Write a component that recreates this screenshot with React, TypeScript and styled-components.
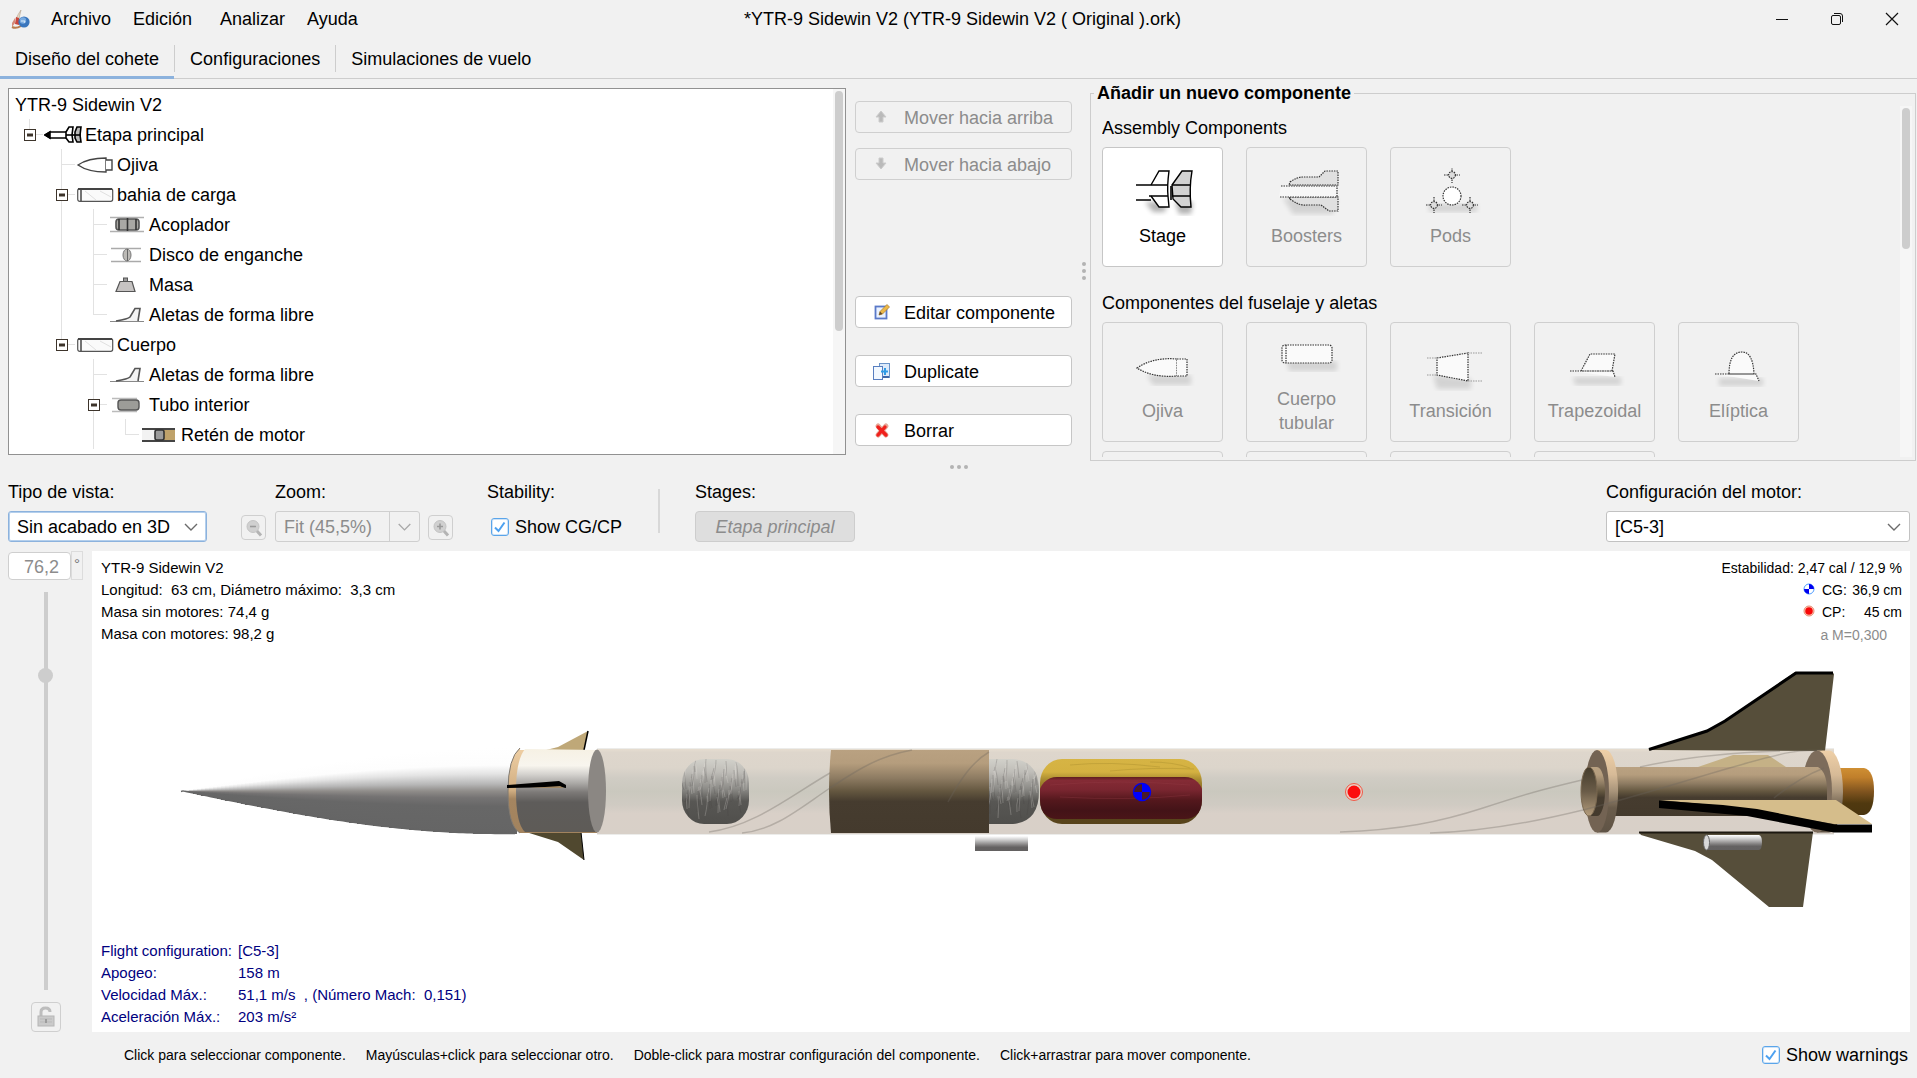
import React from 'react';
import styled, { createGlobalStyle, css } from 'styled-components';

const GlobalStyle = createGlobalStyle`
  *, *::before, *::after { box-sizing: border-box; }
  body { margin: 0; background: #f1f1f1; }
  body, button, input, select {
    font-family: "Liberation Sans", Arial, sans-serif;
    font-size: 18px;
    line-height: 20px;
    color: #000;
  }
`;

/* ---------- window frame ---------- */

const Window = styled.div`
  display: flex;
  flex-direction: column;
  height: 100vh;
  min-height: 820px;
  background: #f1f1f1;
  overflow: hidden;
`;

const TitleBar = styled.header`
  display: grid;
  grid-template-columns: 1fr auto 1fr;
  align-items: center;
  height: 38px;
  padding: 0 2px 0 10px;
`;

const MenuBar = styled.nav`
  display: flex;
  align-items: center;
  gap: 20px;
`;

const MenuButton = styled.button<{ $wide?: boolean }>`
  border: 0;
  padding: 0;
  background: none;
  margin-right: ${(p) => (p.$wide ? 8 : 2)}px;
`;

const WindowTitle = styled.h1`
  margin: 0;
  font-size: 18px;
  font-weight: 400;
  line-height: 20px;
`;

const WindowControls = styled.div`
  display: flex;
  justify-content: flex-end;
`;

const WindowButton = styled.button`
  display: grid;
  place-items: center;
  width: 55px;
  height: 36px;
  padding: 0 0 0 8px;
  border: 0;
  background: none;
`;

const Tabs = styled.div`
  display: flex;
  align-items: stretch;
  height: 41px;
  border-bottom: 1px solid #cdcdcd;
  flex: none;
`;

const Tab = styled.button<{ $active?: boolean }>`
  display: flex;
  align-items: center;
  padding: 4px 15px 0;
  margin-bottom: -1px;
  border: 0;
  border-bottom: 3px solid ${(p) => (p.$active ? '#8cb2dd' : 'transparent')};
  background: none;
`;

const TabDivider = styled.span`
  width: 1px;
  height: 27px;
  margin-top: 7px;
  background: #cdcdcd;
`;

/* ---------- upper split pane ---------- */

const DesignPane = styled.section`
  display: grid;
  grid-template-columns: minmax(0, 838fr) 226px 18px minmax(0, 826fr);
  padding: 4px 1px 0 8px;
  height: 382px;
  flex: none;
`;

const TreeBox = styled.div`
  display: flex;
  height: 367px;
  margin: 5px 0 0;
  border: 1px solid #919191;
  background: #fff;
  overflow: hidden;
`;

const TreeList = styled.ul`
  flex: 1;
  margin: 0;
  padding: 0;
  list-style: none;
`;

const TreeRow = styled.li`
  display: flex;
  align-items: center;
  height: 30px;
`;

const GuideCell = styled.span`
  display: block;
  width: 32px;
  height: 30px;
  flex: none;
`;

const TreeIcon = styled.svg`
  width: 38px;
  height: 20px;
  margin: 2px 3px 0 -4px;
  flex: none;
`;

const TreeLabel = styled.span`
  padding-top: 2px;
  white-space: nowrap;
`;

const TreeStart = styled.span<{ $root?: boolean }>`
  width: ${(p) => (p.$root ? 6 : 7)}px;
  flex: none;
`;

const ScrollTrack = styled.div<{ $thumb: number }>`
  width: 12px;
  padding: 2px;
  background: #f6f6f6;
  flex: none;
  &::before {
    content: '';
    display: block;
    height: ${(p) => p.$thumb}px;
    border-radius: 4px;
    background: #cdcdcd;
  }
`;

const ActionColumn = styled.div`
  display: flex;
  flex-direction: column;
  justify-content: space-between;
  height: 345px;
  padding-left: 9px;
  margin-top: 18px;
`;

const ActionGroup = styled.div<{ $gap: number }>`
  display: flex;
  flex-direction: column;
  gap: ${(p) => p.$gap}px;
`;

const buttonFrame = css`
  border: 1px solid #c6c6c6;
  border-radius: 4px;
  background: #fff;
  &:disabled {
    border-color: #cfcfcf;
    background: #f1f1f1;
    color: #8c8c8c;
  }
`;

const ActionButton = styled.button`
  ${buttonFrame}
  display: flex;
  align-items: center;
  gap: 12px;
  width: 100%;
  height: 32px;
  padding: 1px 0 0 16px;
  white-space: nowrap;
`;

const GripColumn = styled.div`
  display: flex;
  flex-direction: column;
  align-items: center;
  justify-content: center;
  gap: 3px;
  padding: 0 0 2px 6px;
`;

const GripRow = styled.div`
  display: flex;
  justify-content: center;
  align-items: center;
  gap: 3px;
  height: 12px;
  flex: none;
`;

const GripDot = styled.i`
  width: 4px;
  height: 4px;
  border-radius: 2px;
  background: #b3b3b3;
`;

const ComponentGroup = styled.fieldset`
  display: flex;
  min-width: 0;
  height: 378px;
  margin: 0;
  padding: 0 3px 3px 11px;
  border: 1px solid #cdcdcd;
  overflow: hidden;
`;

const GroupLegend = styled.legend`
  margin-left: -8px;
  padding: 0 3px;
  height: 20px;
  font-weight: 700;
`;

const GroupBody = styled.div`
  display: flex;
  flex: 1;
  height: 354px;
  padding-top: 3px;
`;

const CardArea = styled.div`
  flex: 1;
  overflow: hidden;
`;

const CardHeading = styled.h2`
  margin: 0;
  padding-top: 12px;
  height: 41px;
  font-size: 18px;
  font-weight: 400;
  line-height: 20px;
`;

const CardGrid = styled.div`
  display: grid;
  grid-template-columns: repeat(5, 121px);
  column-gap: 23px;
  row-gap: 9px;
  & + h2 { margin-top: 14px; }
`;

const ComponentCard = styled.button`
  ${buttonFrame}
  display: flex;
  flex-direction: column;
  align-items: center;
  justify-content: center;
  gap: 8px;
  height: 120px;
  padding: 2px 8px 0;
  line-height: 24px;
`;

const CardIcon = styled.svg`
  width: 68px;
  height: 48px;
`;

/* ---------- view toolbar ---------- */

const ViewBar = styled.section`
  display: flex;
  align-items: flex-start;
  height: 78px;
  padding: 8px 7px 0 8px;
  flex: none;
`;

const Field = styled.div<{ $width: number; $after: number }>`
  width: ${(p) => p.$width}px;
  margin-right: ${(p) => p.$after}px;
`;

const FieldLabel = styled.label`
  display: block;
  height: 30px;
  padding-top: 1px;
  white-space: nowrap;
`;

const SelectBox = styled.span<{ $focus?: boolean; $split?: boolean; $disabled?: boolean }>`
  display: grid;
  grid-template-columns: 1fr 30px;
  align-items: center;
  height: 31px;
  border: 1px solid ${(p) => (p.$focus ? '#8cb2dd' : p.$disabled ? '#cfcfcf' : '#c2c2c2')};
  box-shadow: ${(p) => (p.$focus ? 'inset 0 0 0 1px #b4cfec' : 'none')};
  border-radius: 3px;
  background: ${(p) => (p.$disabled ? '#f1f1f1' : '#fff')};
  select {
    grid-area: 1 / 1 / 2 / 3;
    appearance: none;
    height: 29px;
    padding: 1px 30px 0 8px;
    border: 0;
    outline: 0;
    background: none;
    opacity: 1;
    color: ${(p) => (p.$disabled ? '#8c8c8c' : '#000')};
  }
  svg {
    grid-area: 1 / 2 / 2 / 3;
    width: 30px;
    height: 29px;
    pointer-events: none;
    border-left: ${(p) => (p.$split ? '1px solid #cfcfcf' : '0')};
  }
`;

const ToolButton = styled.button<{ $size: number }>`
  ${buttonFrame}
  display: grid;
  place-items: center;
  width: ${(p) => p.$size}px;
  height: ${(p) => p.$size}px;
  padding: 0;
`;

const ZoomButtonSlot = styled.div<{ $after: number }>`
  margin: 34px ${(p) => p.$after}px 0 0;
`;

const CheckLabel = styled.label<{ $indent?: boolean }>`
  display: flex;
  align-items: center;
  gap: 6px;
  height: 31px;
  padding-left: ${(p) => (p.$indent ? 4 : 0)}px;
  white-space: nowrap;
`;

const CheckBox = styled.span`
  display: grid;
  width: 18px;
  height: 18px;
  input {
    grid-area: 1 / 1;
    appearance: none;
    width: 18px;
    height: 18px;
    margin: 0;
    border: 1px solid #5aa5ea;
    border-radius: 3px;
    background: #fff;
    box-shadow: 0 0 0 1px #cfe3f7 inset;
  }
  svg {
    grid-area: 1 / 1;
    pointer-events: none;
  }
`;

const BarDivider = styled.span`
  width: 2px;
  height: 44px;
  margin: 8px 35px 0 -1px;
  background: #d8d8d8;
`;

const StageToggle = styled.button`
  width: 100%;
  height: 31px;
  border: 1px solid #cdcdcd;
  border-radius: 4px;
  background: #dedede;
  color: #8c8c8c;
  font-style: italic;
`;

const Spacer = styled.span`
  flex: 1;
`;

/* ---------- rocket view ---------- */

const ViewArea = styled.section`
  display: grid;
  grid-template-columns: 84px minmax(0, 1fr);
  flex: 1;
  min-height: 0;
  padding: 0 7px 0 8px;
`;

const RotationColumn = styled.div`
  display: flex;
  flex-direction: column;
  min-height: 0;
`;

const AngleRow = styled.div`
  display: flex;
  align-items: flex-start;
  height: 29px;
`;

const AngleInput = styled.input`
  width: 63px;
  height: 28px;
  margin: 1px 0 0;
  padding: 2px 11px 0 0;
  text-align: right;
  border: 1px solid #cfcfcf;
  border-radius: 4px;
  background: #fff;
  color: #8c8c8c;
`;

const DegreeButton = styled.button`
  width: 12px;
  height: 29px;
  padding: 0 0 4px;
  border: 1px solid #dcdcdc;
  background: #f1f1f1;
  font-size: 15px;
  color: #777;
`;

const RotationSlider = styled.input`
  appearance: none;
  writing-mode: vertical-lr;
  flex: 1;
  width: 15px;
  min-height: 0;
  margin: 12px 0 12px 30px;
  background: linear-gradient(#cdcdcd, #cdcdcd) center / 4px 100% no-repeat;
  opacity: 1;
  &::-webkit-slider-thumb {
    appearance: none;
    width: 15px;
    height: 15px;
    border-radius: 50%;
    background: #cdcdcd;
  }
`;

const LockSlot = styled.div`
  margin-left: 23px;
`;

const RocketCanvas = styled.div`
  display: grid;
  min-height: 0;
  background: #fff;
  overflow: hidden;
  font-size: 15px;
  line-height: 22px;
`;

const RocketDrawing = styled.svg`
  grid-area: 1 / 1;
  width: 100%;
  height: 100%;
`;

const SharedDefs = styled.svg`
  display: block;
  width: 0;
  height: 0;
  flex: none;
`;

const Overlay = styled.div`
  grid-area: 1 / 1;
  display: flex;
  flex-direction: column;
  justify-content: space-between;
  padding: 6px 8px 4px 9px;
`;

const OverlayTop = styled.div`
  display: flex;
  justify-content: space-between;
`;

const InfoLine = styled.p`
  margin: 0;
  height: 22px;
  white-space: pre;
`;

const StabilityLine = styled.p`
  display: flex;
  align-items: center;
  justify-content: flex-end;
  gap: 7px;
  margin: 0;
  height: 22px;
  font-size: 14px;
`;

const StabilityValue = styled.span`
  display: flex;
  justify-content: space-between;
  width: 80px;
`;

const MachNote = styled(StabilityLine)`
  height: 24px;
  padding-right: 15px;
  color: #8c8c8c;
`;

const FlightData = styled.dl`
  display: grid;
  grid-template-columns: 137px auto;
  grid-auto-rows: 22px;
  margin: 0;
  color: #000080;
  dd { margin: 0; white-space: pre; }
`;

const StatusBar = styled.footer`
  display: flex;
  align-items: center;
  justify-content: space-between;
  height: 46px;
  padding: 0 9px 0 124px;
  flex: none;
`;

const Hints = styled.div`
  display: flex;
  gap: 20px;
  font-size: 14px;
  white-space: nowrap;
`;

/* ---------- small drawings ---------- */

const AppLogo = () => (
  <svg width="21" height="21" viewBox="0 0 21 21">
    <path d="M11 1 Q10 5 9 10 L6 10 Q8 5 11 1Z" fill="#e7d9c4" stroke="#a8947e" strokeWidth=".5" />
    <path d="M6 8 L9 9 L9 16 L5 15Z" fill="#c8463c" />
    <path d="M5 9 L2 14 L2 18 L5 14Z" fill="#d48a78" />
    <path d="M2 18 Q6 20 11 17" stroke="#b97c4c" strokeWidth="2" fill="none" />
    <circle cx="14" cy="13" r="5.6" fill="#3a76bd" />
    <circle cx="13" cy="11.5" r="3.2" fill="#79abe0" />
    <path d="M11 12 L15 12 L14 14" stroke="#dcebfa" fill="none" strokeWidth="1" />
  </svg>
);

const Chevron = ({ muted }: { muted?: boolean }) => (
  <svg viewBox="0 0 30 29">
    <path d="M9 12 L15 18 L21 12" fill="none" stroke={muted ? '#a8a8a8' : '#6b6b6b'} strokeWidth="1.4" />
  </svg>
);

const CheckMark = () => (
  <svg width="18" height="18" viewBox="0 0 18 18">
    <path d="M4 9.5 L7.5 13 L13.5 4.5" fill="none" stroke="#4da1f0" strokeWidth="2" />
  </svg>
);

const MoveArrow = ({ down }: { down?: boolean }) => (
  <svg width="20" height="20" viewBox="0 0 20 20">
    {down ? (
      <path d="M7 3 h4 v5 h3 l-5 6 l-5 -6 h3z" fill="#bababa" stroke="#cccccc" />
    ) : (
      <path d="M7 14 h4 v-5 h3 l-5 -6 l-5 6 h3z" fill="#bababa" stroke="#cccccc" />
    )}
  </svg>
);

const EditIcon = () => (
  <svg width="20" height="20" viewBox="0 0 20 20">
    <rect x="3.5" y="3.5" width="11" height="12" fill="#eaf2ff" stroke="#5a79c8" strokeWidth="1.8" />
    <path d="M7 12 L8 8.500 L15 1.500 L17.500 4 L10.500 11Z" fill="#edb949" stroke="#a87a2a" strokeWidth=".7" />
    <path d="M7 12 L8 8.500 L10.500 11Z" fill="#604a2e" />
  </svg>
);

const DuplicateIcon = () => (
  <svg width="20" height="20" viewBox="0 0 20 20">
    <rect x="7.5" y="1.5" width="10" height="14" fill="#dceafa" stroke="#6a93c8" />
    <rect x="1.5" y="4.5" width="9" height="13" fill="#f2f8ff" stroke="#587ec0" />
    <path d="M9 9.5 h7 M13 6 v7" stroke="#2f9be6" strokeWidth="2" />
    <path d="M11 15 h6" stroke="#3f66a8" strokeWidth="2" />
  </svg>
);

const DeleteIcon = () => (
  <svg width="20" height="20" viewBox="0 0 20 20">
    <path d="M6 5 L14 14 M14 5 L6 14" stroke="#e6a899" strokeWidth="5" strokeLinecap="round" />
    <path d="M6 6 L14 14 M13 6 L6 14" stroke="#f0201c" strokeWidth="3.4" strokeLinecap="round" />
  </svg>
);

const MagnifierIcon = ({ plus }: { plus?: boolean }) => (
  <svg width="20" height="20" viewBox="0 0 20 20">
    <circle cx="9" cy="8.5" r="6" fill="#d0d0d0" stroke="#c4c4c4" />
    <path d="M13 13 L17 17.5" stroke="#b4b4b4" strokeWidth="3" />
    <path d={plus ? 'M6 8.5 h6 M9 5.5 v6' : 'M6 8.5 h6'} stroke="#9a9a9a" strokeWidth="1.6" />
  </svg>
);

const LockIcon = () => (
  <svg width="20" height="22" viewBox="0 0 20 22">
    <path d="M5 11 V6 Q5 2 9.5 2 Q14 2 14 6" fill="none" stroke="#bdbdbd" strokeWidth="3" />
    <rect x="2" y="10" width="16" height="10" fill="#cacaca" stroke="#b6b6b6" />
    <path d="M4 13 h12 M4 16 h12" stroke="#b9b9b9" />
    <rect x="9" y="13" width="2" height="4" fill="#9c9c9c" />
  </svg>
);

const CgMark = () => (
  <svg width="12" height="14" viewBox="0 0 12 14">
    <circle cx="6" cy="6" r="5" fill="#fff" stroke="#4e9cff" />
    <path d="M6 6 V1 A5 5 0 0 1 11 6Z M6 6 V11 A5 5 0 0 1 1 6Z" fill="#0000f0" />
  </svg>
);

const CpMark = () => (
  <svg width="12" height="14" viewBox="0 0 12 14">
    <circle cx="6" cy="6" r="5" fill="#ffd9c8" stroke="#e07050" strokeWidth=".8" />
    <circle cx="6" cy="6" r="3.8" fill="#f80808" />
  </svg>
);

type Kind = 'stage' | 'nose' | 'tube' | 'coupler' | 'bulkhead' | 'mass' | 'freeform' | 'inner' | 'block';

const treeDrawings: Record<Kind, React.ReactNode> = {
  stage: (
    <g stroke="#000" strokeWidth="1.6" fill="#fff">
      <path d="M22 7 H6 L1 10 L6 13 H22" />
      <path d="M1 10 L6 7 V13Z" fill="#000" />
      <path d="M22 7 L25 2 H29 L28 10 L29 17 H25 L22 13Z" />
      <path d="M31 7 L33 2 H37 L36 10 L37 17 H33 L31 13Z" fill="#bbb" />
      <path d="M22 10 H37" />
    </g>
  ),
  nose: (
    <g stroke="#444" strokeWidth="1.4" fill="#fff">
      <path d="M2 10 Q12 3 30 3 V17 Q12 17 2 10Z" />
      <path d="M30 5 H36 V15 H30" />
    </g>
  ),
  tube: (
    <g>
      <rect x="1.7" y="3.7" width="35" height="12.6" rx="2" fill="#fafafa" stroke="#555" strokeWidth="1.2" />
      <path d="M2 4 H36" stroke="#444" strokeWidth="2" />
      <path d="M5 4 V16" stroke="#444" strokeWidth="1.5" />
      <path d="M9 6 L20 15 M24 6 L35 12" stroke="#e0e0e0" />
    </g>
  ),
  coupler: (
    <g>
      <path d="M2 2.5 H36 M2 16.5 H36" stroke="#b0b0b0" strokeWidth="1.4" />
      <rect x="8" y="4" width="23" height="11" rx="3" fill="#a9a8a4" stroke="#555" strokeWidth="1.6" />
      <path d="M11 4 V15 M19.500 3 V16 M28 4 V15" stroke="#333" strokeWidth="1.6" />
    </g>
  ),
  bulkhead: (
    <g>
      <path d="M3 3.5 H33 M3 16.5 H33" stroke="#aaa" strokeWidth="1.6" />
      <ellipse cx="19" cy="10" rx="4" ry="6" fill="#bcbab6" stroke="#777" />
      <path d="M19.500 4 V16" stroke="#666" />
    </g>
  ),
  mass: (
    <g>
      <rect x="15.500" y="3" width="4" height="4" fill="#999" stroke="#555" />
      <path d="M12 6.5 H24 L27 16.5 H8Z" fill="#c6c3c2" stroke="#555" strokeWidth="1.2" />
    </g>
  ),
  freeform: (
    <g>
      <path d="M2 16.5 H36" stroke="#888" strokeWidth="1.2" />
      <path d="M8 16 Q20 14 22 12 L27 3.500 H32 L30 16" fill="#f3f3f3" stroke="#555" strokeWidth="1.6" />
    </g>
  ),
  inner: (
    <g>
      <path d="M4 3.5 H29 M4 16.5 H29" stroke="#bbb" strokeWidth="1.4" />
      <rect x="10" y="5" width="21" height="10" rx="3" fill="#9c9c98" stroke="#555" strokeWidth="1.4" />
    </g>
  ),
  block: (
    <g>
      <rect x="2" y="4" width="33" height="12" fill="#f2f2f2" />
      <rect x="23" y="4" width="12" height="12" fill="#bfa26a" />
      <path d="M2 4 H35 M2 16 H35" stroke="#444" strokeWidth="2" />
      <rect x="15" y="5" width="9" height="10" rx="2" fill="#9b9b9b" stroke="#333" strokeWidth="1.6" />
    </g>
  ),
};

type Guide = 'none' | 'line' | 'branch' | 'last' | 'box' | 'boxFirst' | 'boxLast';

const GuideDrawing = ({ kind }: { kind: Guide }) => {
  const boxed = kind.startsWith('box');
  return (
    <GuideCell>
      <svg width="32" height="30" viewBox="0 0 32 30">
        <g stroke="#e2e2e2">
          {(kind === 'line' || kind === 'branch' || kind === 'box') && <path d="M13.5 0 V30" />}
          {(kind === 'last' || kind === 'boxLast' || kind === 'boxFirst') && <path d="M13.5 0 V15" />}
          {kind !== 'none' && kind !== 'line' && <path d="M13 15.5 H27" />}
        </g>
        {boxed && (
          <g>
            <rect x="8.5" y="10.5" width="11" height="11" fill="#fff" stroke="#3d342b" />
            <path d="M11 16 H17" stroke="#3d342b" strokeWidth="3" />
          </g>
        )}
      </svg>
    </GuideCell>
  );
};

interface Node {
  label: string;
  icon?: Kind;
  guides: Guide[];
}

const nodes: Node[] = [
  { label: 'YTR-9 Sidewin V2', guides: [] },
  { label: 'Etapa principal', icon: 'stage', guides: ['boxFirst'] },
  { label: 'Ojiva', icon: 'nose', guides: ['none', 'branch'] },
  { label: 'bahia de carga', icon: 'tube', guides: ['none', 'box'] },
  { label: 'Acoplador', icon: 'coupler', guides: ['none', 'line', 'branch'] },
  { label: 'Disco de enganche', icon: 'bulkhead', guides: ['none', 'line', 'branch'] },
  { label: 'Masa', icon: 'mass', guides: ['none', 'line', 'branch'] },
  { label: 'Aletas de forma libre', icon: 'freeform', guides: ['none', 'line', 'last'] },
  { label: 'Cuerpo', icon: 'tube', guides: ['none', 'boxLast'] },
  { label: 'Aletas de forma libre', icon: 'freeform', guides: ['none', 'none', 'branch'] },
  { label: 'Tubo interior', icon: 'inner', guides: ['none', 'none', 'box'] },
  { label: 'Retén de motor', icon: 'block', guides: ['none', 'none', 'line', 'last'] },
];

/* ---------- palette cards ---------- */

const CardDrawing = ({ kind }: { kind: string }) => {
  const dots = { fill: '#fafafa', stroke: '#333', strokeWidth: 1.2, strokeDasharray: '1.5 1' };
  const shadow = { fill: '#000', opacity: 0.12, filter: 'url(#soft)' };
  switch (kind) {
    case 'stage':
      return (
        <g stroke="#000" strokeWidth="1.4" fill="#fff">
          <path d="M16 34 H38 L36 44 H24Z M46 34 H64 L62 46 H50Z" stroke="none" {...shadow} opacity={0.3} />
          <path d="M22 17 L30 3 H40 Q38 18 39 28 L40 39 H30 L22 28" />
          <path d="M7 17 H39 M20 28 H39 M7 32 H22" fill="none" />
          <path d="M43 17 L53 3 H63 Q60 20 62 39 H52 L44 31Z" fill="#d2d2d2" />
          <path d="M43 17 H61 M43 28 H61 M42 18 V32" strokeWidth="1.6" />
        </g>
      );
    case 'boosters':
      return (
        <g>
          <path d="M10 30 H64 L60 46 H20Z" {...shadow} />
          <g {...dots}>
            <path d="M17 14 Q24 9 30 9 H46 L52 3 H65 V17 H16Z" fill="#e0e0e0" />
            <path d="M17 31 Q26 38 34 37 H48 L56 43 H65 V29 H16Z" fill="#e0e0e0" />
            <path d="M8 18 H64 V29 H6" fill="#f7f7f7" />
          </g>
        </g>
      );
    case 'pods':
      return (
        <g>
          <path d="M12 36 H60 V44 H12Z" {...shadow} />
          <g {...dots}>
            <circle cx="35" cy="28" r="9" fill="#fff" />
            {[[35, 7], [17, 37], [53, 37]].map(([x, y]) => (
              <g key={`${x}`}>
                <path d={`M${x - 8} ${y} H${x + 8} M${x} ${y - 8} V${y + 8}`} />
                <circle cx={x} cy={y} r="3.4" fill="#ddd" />
              </g>
            ))}
          </g>
        </g>
      );
    case 'nose':
      return (
        <g>
          <path d="M18 32 H62 V42 H24Z" {...shadow} />
          <g {...dots}>
            <path d="M8 25 Q24 14 48 16 V33 Q24 35 8 25Z" />
            <path d="M48 16 H58 V33 H48" />
          </g>
        </g>
      );
    case 'tube':
      return (
        <g>
          <path d="M14 30 H64 V40 H16Z" {...shadow} />
          <rect x="9" y="14" width="50" height="18" rx="3" {...dots} />
          <path d="M13 14 V32" {...dots} />
        </g>
      );
    case 'transition':
      return (
        <g>
          <path d="M16 32 L54 36 V46 H20Z" {...shadow} />
          <path d="M10 15 H20 M51 10 H65 M10 32 H20 M51 38 H65" {...dots} stroke="#999" />
          <path d="M20 15 L51 10 V38 L20 32Z" {...dots} />
        </g>
      );
    case 'trapezoid':
      return (
        <g>
          <path d="M12 34 H60 V42 H14Z" {...shadow} />
          <path d="M20 28 L29 11 H54 L51 28Z M9 28 H52 L54 34" {...dots} />
        </g>
      );
    default:
      return (
        <g>
          <path d="M14 35 H58 V43 H14Z" {...shadow} />
          <path d="M24 31 Q24 9 37 9 Q48 9 49 31Z M10 31 H51 L54 38" {...dots} />
        </g>
      );
  }
};

const Card = ({ label, kind, enabled }: { label?: string; kind?: string; enabled?: boolean }) => (
  <ComponentCard type="button" disabled={!enabled} aria-label={label ? undefined : 'Componente'}>
    {kind && (
      <CardIcon viewBox="0 0 68 48">
        <CardDrawing kind={kind} />
      </CardIcon>
    )}
    {label}
  </ComponentCard>
);

/* ---------- rocket ---------- */

const NOSE_START = 181;
const NOSE_END = 517;
const SLICE = 4;

const noseSlices = Array.from({ length: (NOSE_END - NOSE_START) / SLICE }, (_, i) => {
  const x = NOSE_START + i * SLICE;
  const t = Math.min(1, (x + SLICE / 2 - NOSE_START) / 324);
  return { x, r: 43 * Math.sin((Math.PI * t) / 2) };
});

const fibres = (x0: number, x1: number, seed: number) =>
  Array.from({ length: Math.round((x1 - x0) / 2) * 2 }, (_, i) => {
    const x = x0 + i;
    const a = (i * 37 + seed * 3) % 41;
    const b = (i * 23 + seed) % 13;
    return (
      <path
        key={i}
        d={`M${x} ${758 + a} q${(a % 5) - 2} 7 ${(b % 7) - 3} ${12 + b}`}
        stroke={i % 2 ? '#f4f2ee' : '#44423f'}
        opacity={0.22}
        fill="none"
      />
    );
  });

const grad = (id: string, stops: [number, string][]) => (
  <linearGradient id={id} x1="0" y1="0" x2="0" y2="1">
    {stops.map(([o, c]) => (
      <stop key={o} offset={o} stopColor={c} />
    ))}
  </linearGradient>
);

const Rocket = () => (
  <RocketDrawing viewBox="92 551 1818 481" role="img" aria-label="YTR-9 Sidewin V2">
    <defs>
      {grad('shade-nose', [[0, '#ffffff'], [0.2, '#fdfdfd'], [0.3, '#e4e4e4'], [0.42, '#b6b6b6'], [0.5, '#908d8a'], [0.58, '#757373'], [0.68, '#676767'], [1, '#656565']])}
      {grad('shade-collar', [[0, '#f6f1e4'], [0.2, '#f8f5ee'], [0.3, '#d6d4d0'], [0.42, '#a8a6a3'], [0.52, '#7d7a78'], [0.64, '#5e5c5a'], [1, '#5e5b57']])}
      {grad('shade-body', [[0, '#e6ddd0'], [0.04, '#ded6cc'], [0.22, '#dcd5cb'], [0.34, '#d0ccc4'], [0.5, '#cac8be'], [0.66, '#d0cbc3'], [0.76, '#d9d0c8'], [1, '#d8d0c8']])}
      {grad('shade-kraft', [[0, '#b9a181'], [0.16, '#b59d7d'], [0.34, '#8d7b62'], [0.5, '#63563f'], [0.62, '#463c2f'], [1, '#443a2d']])}
      {grad('shade-wad', [[0, '#d2d1ca'], [0.2, '#bfbdb8'], [0.45, '#8e8d89'], [0.65, '#585754'], [1, '#504f4c']])}
      {grad('shade-mustard', [[0, '#d6b444'], [0.2, '#d4b141'], [0.32, '#a88a30'], [0.7, '#5c471c'], [1, '#57431b']])}
      {grad('shade-meat', [[0, '#5e1d1f'], [0.08, '#842b35'], [0.3, '#7a2630'], [0.55, '#54181d'], [0.8, '#431317'], [1, '#4a1518']])}
      {grad('shade-metal', [[0, '#ffffff'], [0.25, '#cfcfcf'], [0.6, '#828080'], [0.75, '#646262'], [1, '#636161']])}
      {grad('shade-ring', [[0, '#efd0a8'], [0.3, '#d6ba97'], [0.5, '#a8947a'], [0.7, '#6a5c4b'], [1, '#5f5345']])}
      {grad('shade-peach', [[0, '#efcfa4'], [0.5, '#d0ae82'], [0.6, '#a48560'], [1, '#a2835e']])}
      {grad('shade-bore', [[0, '#443b2b'], [0.5, '#6a5c48'], [1, '#b49c7c']])}
      {grad('shade-engine', [[0, '#cf8f33'], [0.2, '#c07f2b'], [0.5, '#80541f'], [0.75, '#50390f'], [1, '#4a350f']])}
      <clipPath id="wadA"><rect x="682" y="759" width="67" height="65" rx="22" ry="24" /></clipPath>
      <clipPath id="wadB"><path d="M989 759 h24 q26 2 26 32 q0 31 -26 33 h-24z" /></clipPath>
      <clipPath id="bun"><rect x="1040" y="759" width="162" height="65" rx="22" ry="24" /></clipPath>
    </defs>

    {/* nose cone */}
    <g shapeRendering="crispEdges">
      {noseSlices.map((s) => (
        <rect key={s.x} x={s.x} y={791 - s.r} width={SLICE} height={s.r * 2} fill="url(#shade-nose)" />
      ))}
    </g>
    <path
      d={`M${NOSE_START} 791.5 ${noseSlices.map((s) => `L${s.x + 2} ${790.5 + s.r}`).join(' ')}`}
      fill="none"
      stroke="#656565"
      strokeWidth="1.4"
    />

    {/* front canard fins */}
    <path d="M546 750 L558 747 L588 731 L584 750Z" fill="#bfa878" />
    <path d="M588 731 L584 750" stroke="#000" strokeWidth="1.5" />
    <path d="M526 832 L558 842 L584 860 L581 832Z" fill="#50482f" />
    <path d="M584 860 L581 832" stroke="#000" />

    {/* main tube */}
    <rect x="597" y="749" width="1237" height="85" fill="url(#shade-body)" />
    <path d="M597 748.5 H1834 M597 834.5 H1834" stroke="#ececea" />

    {/* shoulder */}
    <path d="M520 748 Q508 758 508 791 Q508 826 520 833 H597 V750 H520Z" fill="url(#shade-peach)" />
    <path d="M520 748 Q508 758 508 791 Q508 826 520 833" fill="none" stroke="#807a72" />
    <path d="M525 749 Q516 760 516 791 Q516 824 525 832 H597 V750Z" fill="url(#shade-collar)" />
    <ellipse cx="597" cy="791" rx="9" ry="41.5" fill="#8b8783" />
    <path d="M507 785 L559 781 L566 785 V788 L560 787 L507 788Z" fill="#000" />
    <path d="M530 788 L560 786 L564 788Z" fill="#a18762" />

    {/* wadding */}
    <rect x="682" y="759" width="67" height="65" rx="22" ry="24" fill="url(#shade-wad)" />
    <g clipPath="url(#wadA)">{fibres(682, 748, 5)}</g>
    <path d="M989 759 h24 q26 2 26 32 q0 31 -26 33 h-24z" fill="url(#shade-wad)" />
    <g clipPath="url(#wadB)">{fibres(989, 1039, 11)}</g>

    {/* coupler tube */}
    <path d="M831 750 H989 V833 H831 Q827 791 831 750Z" fill="url(#shade-kraft)" />

    {/* payload */}
    <rect x="1040" y="759" width="162" height="65" rx="22" ry="24" fill="url(#shade-mustard)" />
    <g clipPath="url(#bun)">
      <path d="M1070 765 q40 -4 90 2 M1110 771 q40 -4 84 -2 M1150 762 q24 0 40 6" stroke="#a88c2e" fill="none" opacity=".4" />
      <rect x="1039" y="777" width="164" height="42" rx="18" fill="url(#shade-meat)" />
      <path d="M1050 785 q70 -6 140 0 M1060 797 q70 4 130 -2" stroke="#98404a" opacity=".3" fill="none" />
    </g>

    {/* launch lug under the body */}
    <rect x="975" y="836" width="53" height="15" fill="url(#shade-metal)" />

    {/* tail */}
    <path d="M1648 750 L1707 731 L1725 721 L1795 672 H1832 L1834 674 L1825 751Z" fill="#564e3a" />
    <path d="M1649 749.5 L1707 731 L1725 721 L1796 673 H1833" fill="none" stroke="#000" strokeWidth="3" />
    <path d="M1698 767 L1733 755 H1768 L1786 767Z" fill="#c5b186" />
    <path d="M1840 768 H1864 Q1874 770 1874 791 Q1874 813 1864 815 H1836Z" fill="url(#shade-engine)" />
    <path d="M1817 750.5 H1829 A14 41 0 0 1 1829 832.5 H1817Z" fill="url(#shade-ring)" />
    <ellipse cx="1817" cy="791.5" rx="15" ry="41" fill="#7d6c5b" />
    <path d="M1589 767 H1818 Q1827 772 1827 791 V816 H1589Z" fill="url(#shade-kraft)" />
    <path d="M1597 750 H1606 A12 41 0 0 1 1606 832.5 H1597Z" fill="url(#shade-ring)" />
    <ellipse cx="1597" cy="791.3" rx="12" ry="41.3" fill="#736353" />
    <path d="M1589 767 H1597 A8 24.5 0 0 1 1597 816 H1589Z" fill="url(#shade-kraft)" />
    <ellipse cx="1589" cy="791.5" rx="8" ry="24.5" fill="url(#shade-bore)" stroke="#7a6850" />
    <path d="M1660 800 L1836 800 L1872 824 H1834 L1757 811 L1723 806Z" fill="#d5bd8b" />
    <path d="M1659 800.5 L1723 805 L1757 809 L1835 824.5 H1872 V832.5 H1834 L1747 816 L1659 808Z" fill="#000" />
    <path d="M1639 832 H1813 L1803 907 H1769 L1712 860 L1695 851 L1641 835Z" fill="#564e3a" />
    <path d="M1639 832.5 H1813" stroke="#1c1810" strokeWidth="2" />
    <path d="M1707 835 H1759 Q1762 836 1762 842 Q1762 849 1759 850 H1707Z" fill="url(#shade-metal)" />
    <ellipse cx="1706.5" cy="842.5" rx="3" ry="7.5" fill="#d8d8d8" stroke="#666" />

    {/* spiral seams */}
    <g fill="none" stroke="#6b655e" opacity=".32" strokeWidth="1.5">
      <path d="M709 832 C755 826 790 796 830 773" />
      <path d="M742 833 C775 830 800 808 830 788 S880 756 912 750" />
      <path d="M948 802 C960 780 972 762 989 752" />
      <path d="M1340 832 C1400 830 1440 822 1483 808 S1540 790 1582 780" />
      <path d="M1430 833 C1480 832 1530 823 1583 810 S1690 779 1747 763 S1800 752 1822 750" />
      <path d="M1640 767 C1680 758 1720 753 1780 751" />
      <path d="M1774 798 C1790 785 1806 775 1824 768" />
    </g>

    {/* centre of gravity and centre of pressure */}
    <circle cx="1142" cy="792" r="8.5" fill="#4a1a28" stroke="#0000f0" strokeWidth="1.4" />
    <path d="M1142 792 V783.5 A8.5 8.5 0 0 1 1150.5 792Z M1142 792 V800.5 A8.5 8.5 0 0 1 1133.5 792Z" fill="#0000ff" />
    <circle cx="1354" cy="792" r="8.5" fill="#e8cfc4" stroke="#f05a48" />
    <circle cx="1354" cy="792" r="6.5" fill="#fb0e0e" />
  </RocketDrawing>
);

/* ---------- page ---------- */

export default function App() {
  return (
    <Window>
      <GlobalStyle />
      <SharedDefs aria-hidden="true">
        <filter id="soft"><feGaussianBlur stdDeviation="2.5" /></filter>
      </SharedDefs>

      <TitleBar>
        <MenuBar>
          <AppLogo />
          <MenuButton>Archivo</MenuButton>
          <MenuButton $wide>Edición</MenuButton>
          <MenuButton>Analizar</MenuButton>
          <MenuButton>Ayuda</MenuButton>
        </MenuBar>
        <WindowTitle>*YTR-9 Sidewin V2 (YTR-9 Sidewin V2 ( Original ).ork)</WindowTitle>
        <WindowControls>
          <WindowButton aria-label="Minimizar">
            <svg width="14" height="14"><path d="M1 7.5 H13" stroke="#111" /></svg>
          </WindowButton>
          <WindowButton aria-label="Restaurar">
            <svg width="14" height="14" fill="none" stroke="#111">
              <rect x="1.5" y="3.5" width="9" height="9" rx="1.5" />
              <path d="M4 1.5 H10 Q12.5 1.5 12.5 4 V10" />
            </svg>
          </WindowButton>
          <WindowButton aria-label="Cerrar">
            <svg width="14" height="14"><path d="M1 1 L13 13 M13 1 L1 13" stroke="#111" strokeWidth="1.2" /></svg>
          </WindowButton>
        </WindowControls>
      </TitleBar>

      <Tabs role="tablist">
        <Tab role="tab" $active>Diseño del cohete</Tab>
        <TabDivider />
        <Tab role="tab">Configuraciones</Tab>
        <TabDivider />
        <Tab role="tab">Simulaciones de vuelo</Tab>
      </Tabs>

      <DesignPane>
        <TreeBox>
          <TreeList>
            {nodes.map((n, i) => (
              <TreeRow key={i}>
                <TreeStart $root={!n.icon} />
                {n.guides.map((g, j) => (
                  <GuideDrawing key={j} kind={g} />
                ))}
                {n.icon && <TreeIcon viewBox="0 0 38 20">{treeDrawings[n.icon]}</TreeIcon>}
                <TreeLabel>{n.label}</TreeLabel>
              </TreeRow>
            ))}
          </TreeList>
          <ScrollTrack $thumb={240} />
        </TreeBox>

        <ActionColumn>
          <ActionGroup $gap={15}>
            <ActionButton disabled><MoveArrow />Mover hacia arriba</ActionButton>
            <ActionButton disabled><MoveArrow down />Mover hacia abajo</ActionButton>
          </ActionGroup>
          <ActionGroup $gap={27}>
            <ActionButton><EditIcon />Editar componente</ActionButton>
            <ActionButton><DuplicateIcon />Duplicate</ActionButton>
            <ActionButton><DeleteIcon />Borrar</ActionButton>
          </ActionGroup>
        </ActionColumn>

        <GripColumn><GripDot /><GripDot /><GripDot /></GripColumn>

        <ComponentGroup>
          <GroupLegend>Añadir un nuevo componente</GroupLegend>
          <GroupBody>
            <CardArea>
              <CardHeading>Assembly Components</CardHeading>
              <CardGrid>
                <Card label="Stage" kind="stage" enabled />
                <Card label="Boosters" kind="boosters" />
                <Card label="Pods" kind="pods" />
              </CardGrid>
              <CardHeading>Componentes del fuselaje y aletas</CardHeading>
              <CardGrid>
                <Card label="Ojiva" kind="nose" />
                <Card label="Cuerpo tubular" kind="tube" />
                <Card label="Transición" kind="transition" />
                <Card label="Trapezoidal" kind="trapezoid" />
                <Card label="Elíptica" kind="ellipse" />
                <Card /><Card /><Card /><Card />
              </CardGrid>
            </CardArea>
            <ScrollTrack $thumb={141} />
          </GroupBody>
        </ComponentGroup>
      </DesignPane>

      <GripRow><GripDot /><GripDot /><GripDot /></GripRow>

      <ViewBar>
        <Field $width={199} $after={34}>
          <FieldLabel htmlFor="view-type">Tipo de vista:</FieldLabel>
          <SelectBox $focus>
            <select id="view-type"><option>Sin acabado en 3D</option></select>
            <Chevron />
          </SelectBox>
        </Field>
        <ZoomButtonSlot $after={9}>
          <ToolButton $size={25} disabled aria-label="Alejar"><MagnifierIcon /></ToolButton>
        </ZoomButtonSlot>
        <Field $width={145} $after={8}>
          <FieldLabel htmlFor="zoom">Zoom:</FieldLabel>
          <SelectBox $split $disabled>
            <select id="zoom" disabled><option>Fit (45,5%)</option></select>
            <Chevron muted />
          </SelectBox>
        </Field>
        <ZoomButtonSlot $after={34}>
          <ToolButton $size={25} disabled aria-label="Acercar"><MagnifierIcon plus /></ToolButton>
        </ZoomButtonSlot>
        <Field $width={138} $after={34}>
          <FieldLabel as="span">Stability:</FieldLabel>
          <CheckLabel $indent>
            <CheckBox><input type="checkbox" defaultChecked /><CheckMark /></CheckBox>
            Show CG/CP
          </CheckLabel>
        </Field>
        <BarDivider />
        <Field $width={160} $after={0}>
          <FieldLabel as="span">Stages:</FieldLabel>
          <StageToggle disabled>Etapa principal</StageToggle>
        </Field>
        <Spacer />
        <Field $width={304} $after={0}>
          <FieldLabel htmlFor="motor-config">Configuración del motor:</FieldLabel>
          <SelectBox>
            <select id="motor-config"><option>[C5-3]</option></select>
            <Chevron />
          </SelectBox>
        </Field>
      </ViewBar>

      <ViewArea>
        <RotationColumn>
          <AngleRow>
            <AngleInput aria-label="Ángulo" defaultValue="76,2" disabled />
            <DegreeButton disabled>°</DegreeButton>
          </AngleRow>
          <RotationSlider type="range" aria-label="Rotación" min={0} max={360} defaultValue={71} disabled />
          <LockSlot>
            <ToolButton $size={30} disabled aria-label="Bloquear"><LockIcon /></ToolButton>
          </LockSlot>
        </RotationColumn>

        <RocketCanvas>
          <Rocket />
          <Overlay>
            <OverlayTop>
              <div>
                <InfoLine>YTR-9 Sidewin V2</InfoLine>
                <InfoLine>{'Longitud:  63 cm, Diámetro máximo:  3,3 cm'}</InfoLine>
                <InfoLine>Masa sin motores: 74,4 g</InfoLine>
                <InfoLine>Masa con motores: 98,2 g</InfoLine>
              </div>
              <div>
                <StabilityLine>Estabilidad: 2,47 cal / 12,9 %</StabilityLine>
                <StabilityLine><CgMark /><StabilityValue><span>CG:</span><span>36,9 cm</span></StabilityValue></StabilityLine>
                <StabilityLine><CpMark /><StabilityValue><span>CP:</span><span>45 cm</span></StabilityValue></StabilityLine>
                <MachNote>a M=0,300</MachNote>
              </div>
            </OverlayTop>
            <FlightData>
              <dt>Flight configuration:</dt><dd>[C5-3]</dd>
              <dt>Apogeo:</dt><dd>158 m</dd>
              <dt>Velocidad Máx.:</dt><dd>{'51,1 m/s  , (Número Mach:  0,151)'}</dd>
              <dt>Aceleración Máx.:</dt><dd>203 m/s²</dd>
            </FlightData>
          </Overlay>
        </RocketCanvas>
      </ViewArea>

      <StatusBar>
        <Hints>
          <span>Click para seleccionar componente.</span>
          <span>Mayúsculas+click para seleccionar otro.</span>
          <span>Doble-click para mostrar configuración del componente.</span>
          <span>Click+arrastrar para mover componente.</span>
        </Hints>
        <CheckLabel>
          <CheckBox><input type="checkbox" defaultChecked /><CheckMark /></CheckBox>
          Show warnings
        </CheckLabel>
      </StatusBar>
    </Window>
  );
}
